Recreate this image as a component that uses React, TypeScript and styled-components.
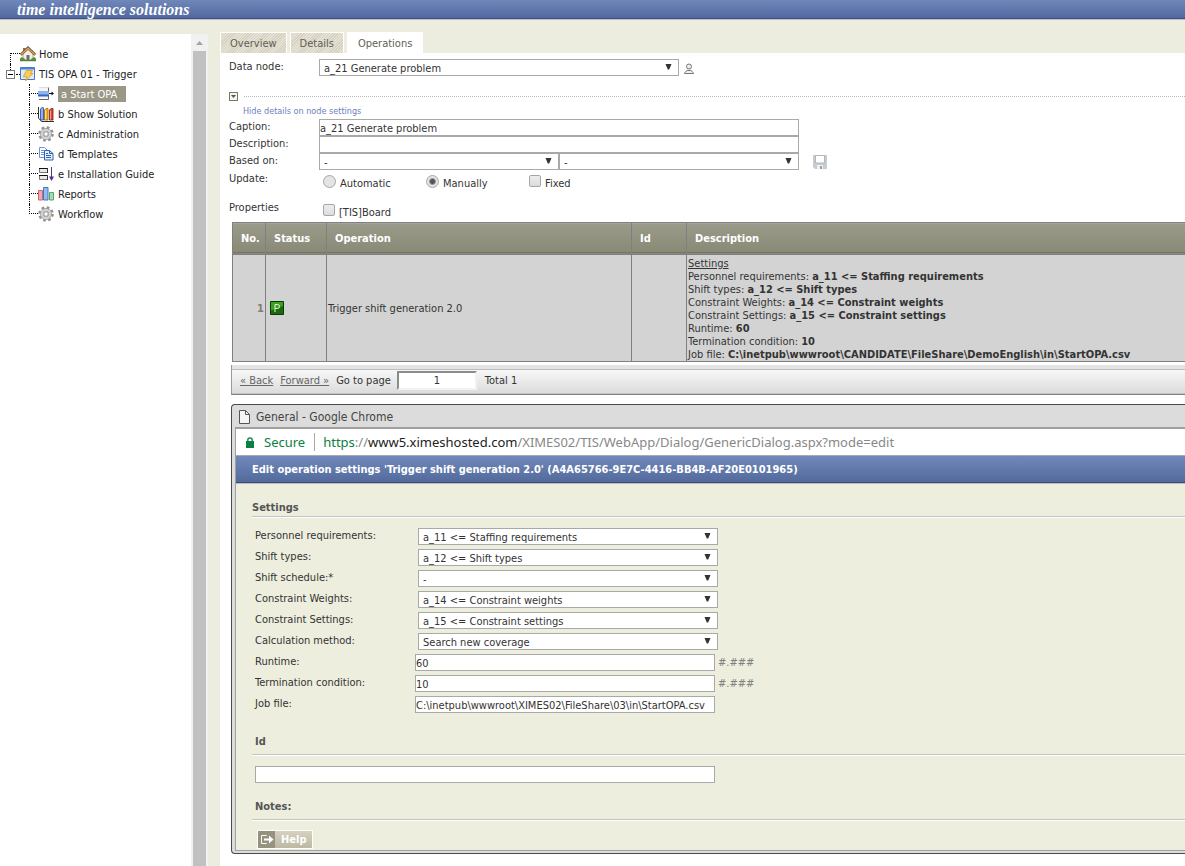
import React from "react";
import styled, { createGlobalStyle } from "styled-components";

const ui = '"DejaVu Sans Condensed", Tahoma, "Noto Sans", sans-serif';
const addressUi = '"Noto Sans", "Open Sans", sans-serif';

const Global = createGlobalStyle`
  *, *::before, *::after { box-sizing: border-box; }
  html, body, #root { height: 100%; }
  body {
    margin: 0;
    background: #ececdf;
    color: #333;
    font: 11px/13px ${ui};
  }
  input, select, button { font: inherit; color: inherit; margin: 0; }
  ul { list-style: none; margin: 0; padding: 0; }
`;

const Page = styled.div`
  display: flex;
  flex-direction: column;
  height: 100vh;
  overflow: hidden;
`;

const Banner = styled.header`
  flex: none;
  height: 19px;
  padding-left: 17px;
  border-bottom: 1px solid #3e5080;
  background: linear-gradient(#6f87b9, #5169a0);
  box-shadow: 0 1px 0 #b9bfcb;
  color: #fff;
  font: italic bold 16px/20px "Liberation Serif", serif;
  white-space: nowrap;
`;

const Columns = styled.div`
  flex: 1;
  min-height: 0;
  display: flex;
`;

/* ---------- navigation tree ---------- */

const Sidebar = styled.nav`
  flex: none;
  display: flex;
  width: 208px;
  margin: 15px 12px 0 0;
  background: #fff;
`;

const Tree = styled.ul`
  flex: 1;
  && { padding-top: 10px; }
`;

const ScrollTrack = styled.div`
  display: flex;
  flex-direction: column;
  align-items: center;
  width: 17px;
  background: #f1f1f1;
`;

const ScrollArrow = styled.svg`
  flex: none;
  width: 17px;
  height: 17px;
`;

const ScrollThumb = styled.div`
  flex: 1;
  width: 13px;
  background: #c1c1c1;
`;

const TreeRow = styled.div`
  display: flex;
  align-items: center;
  height: 20px;
  padding-left: ${(p: { $root?: boolean }) => (p.$root ? "6px" : "29px")};
`;

const Branch = styled.span<{ $last?: boolean }>`
  display: flex;
  flex-direction: column;
  width: 9px;
  height: 20px;
  &::before {
    content: "";
    height: 10px;
    border-left: 1px dotted #000;
    border-bottom: 1px dotted #000;
  }
  &::after {
    content: "";
    height: 10px;
    border-left: ${(p) => (p.$last ? "0" : "1px dotted #000")};
  }
`;

const FirstBranch = styled.span`
  align-self: flex-end;
  width: 10px;
  height: 11px;
  margin-left: 4px;
  border-left: 1px dotted #000;
  border-top: 1px dotted #000;
`;

const ExpanderCell = styled.span`
  display: flex;
  flex-direction: column;
  height: 20px;
  &::before {
    content: "";
    height: 6px;
    margin-left: 4px;
    border-left: 1px dotted #000;
  }
`;

const Expander = styled.button`
  display: grid;
  place-items: center;
  width: 9px;
  height: 9px;
  padding: 0;
  border: 1px solid #7b7b7b;
  background: #fff;
  &::before {
    content: "";
    width: 5px;
    height: 1px;
    background: #000;
  }
`;

const Stub = styled.span`
  width: 4px;
  margin-left: 1px;
  border-top: 1px dotted #000;
`;

const TreeIcon = styled.svg`
  flex: none;
  width: 16px;
  height: 16px;
`;

const TreeLink = styled.a<{ $active?: boolean; $root?: boolean }>`
  margin-left: ${(p) => (p.$root ? "3px" : "4px")};
  padding: ${(p) => (p.$active ? "2px 9px 1px 3px" : "0")};
  background: ${(p) => (p.$active ? "#9a9787" : "none")};
  color: ${(p) => (p.$active ? "#fff" : "#222")};
  text-decoration: none;
  white-space: nowrap;
`;

/* ---------- main column ---------- */

const Main = styled.main`
  flex: 1;
  min-width: 0;
  display: flex;
  flex-direction: column;
`;

const Tabs = styled.div`
  display: flex;
  gap: 3px;
  padding-top: 13px;
`;

const Tab = styled.button<{ $active?: boolean }>`
  height: 21px;
  padding: ${(p) => (p.$active ? "1px 10px 0" : "1px 9px 0")};
  border: 1px solid #fff;
  border-bottom: 0;
  background: ${(p) =>
    p.$active
      ? "#fff"
      : "repeating-linear-gradient(135deg, #e6e3d6 0 1px, #d6d2bf 1px 2px)"};
  color: #5f5f55;
`;

const Panel = styled.section`
  flex: 1;
  min-height: 0;
  background: #fff;
`;

const NodeForm = styled.div`
  padding: 6px 0 0 9px;
`;

const FormRow = styled.div<{ $height?: number }>`
  display: flex;
  align-items: flex-start;
  height: ${(p) => p.$height || 17}px;
`;

const FormLabel = styled.label`
  flex: none;
  width: 90px;
  padding-top: 1px;
`;

const Select = styled.select<{ $width: number }>`
  appearance: none;
  width: ${(p) => p.$width}px;
  height: 17px;
  padding: 1px 18px 0 4px;
  border: 1px solid #a9a9a9;
  border-radius: 0;
  background: #fff
    url("data:image/svg+xml,%3Csvg xmlns='http://www.w3.org/2000/svg' width='7' height='7'%3E%3Cpath d='M.5 1h6L4.200 6.500H2.800z' fill='%23333'/%3E%3C/svg%3E")
    no-repeat right 6px top 3px;
  line-height: 13px;
`;

const TextBox = styled.input<{ $width: number }>`
  width: ${(p) => p.$width}px;
  height: 17px;
  padding: 1px 0 0;
  border: 1px solid #a9a9a9;
  background: #fff;
`;

const IconButton = styled.button<{ $gap: number }>`
  display: flex;
  margin-left: ${(p) => p.$gap}px;
  padding: 2px 0 0;
  border: 0;
  background: none;
`;

const FoldRow = styled.div`
  display: flex;
  align-items: center;
  gap: 6px;
  height: 9px;
  margin-top: 16px;
`;

const FoldButton = styled.button`
  display: grid;
  place-items: center;
  width: 9px;
  height: 9px;
  padding: 0;
  border: 1px solid #77786a;
  background: #f4f4ea;
`;

const DottedRule = styled.div`
  flex: 1;
  border-top: 1px dotted #bbb;
`;

const FoldLink = styled.a`
  display: block;
  margin: 4px 0 1px 14px;
  color: #6c80bd;
  font-size: 9px;
  line-height: 13px;
  text-decoration: none;
`;

const Choice = styled.label<{ $width?: number }>`
  display: flex;
  align-items: flex-start;
  gap: 4px;
  width: ${(p) => (p.$width ? p.$width + "px" : "auto")};
  padding: 4px 0 0 4px;
  span { padding-top: 2px; }
`;

const Radio = styled.input`
  appearance: none;
  flex: none;
  width: 13px;
  height: 13px;
  border: 1px solid #a6a6a6;
  border-radius: 50%;
  background: #e4e4e4;
  &:checked {
    background: radial-gradient(circle, #555 0 2px, #e4e4e4 4px);
  }
`;

const Check = styled.input`
  appearance: none;
  flex: none;
  width: 12px;
  height: 12px;
  border: 1px solid #a6a6a6;
  border-radius: 2px;
  background: linear-gradient(#ededed, #dcdcdc);
`;

/* ---------- operations table ---------- */

const Grid = styled.table`
  width: calc(100% - 12px);
  margin-left: 12px;
  border-collapse: collapse;
  table-layout: fixed;
`;

const Head = styled.th<{ $width?: number }>`
  width: ${(p) => (p.$width ? p.$width + "px" : "auto")};
  height: 32px;
  padding: 0 0 0 8px;
  border: 1px solid #808080;
  border-right-width: ${(p) => (p.$width ? "1px" : "0")};
  background: linear-gradient(#9b9b8b, #898976 29px, #5f5f50 29px, #5f5f50 30px, #b0b0a4 30px);
  color: #fff;
  text-align: left;
`;

const Cell = styled.td<{ $open?: boolean }>`
  height: 107px;
  padding: ${(p) => (p.$open ? "2px 1px 0" : "0 1px")};
  border: 1px solid #808080;
  border-right-width: ${(p) => (p.$open ? "0" : "1px")};
  background: #d3d3d3;
  white-space: nowrap;
`;

const RowNumber = styled.div`
  color: #808070;
  font-weight: bold;
  text-align: right;
`;

const StatusIcon = styled.svg`
  display: block;
  width: 14px;
  height: 14px;
  margin-left: 3px;
`;

const Pager = styled.div`
  display: flex;
  align-items: center;
  height: 30px;
  margin: 3px 0 0 11px;
  padding: 2px 0 0 8px;
  border-left: 1px solid #999;
  border-bottom: 1px solid #808080;
  background: linear-gradient(#e4e4e4 4px, #bdbdbd 4px, #bdbdbd 5px, #f7f7f7 5px, #dcdcdc 28px, #c4c4c4 28px);
`;

const PagerLink = styled.a`
  margin-right: 7px;
  color: #666;
`;

const PageBox = styled.input`
  width: 80px;
  height: 19px;
  margin: 0 8px 0 6px;
  border: 2px solid;
  border-color: #8c8c8c #f2f2f2 #f2f2f2 #8c8c8c;
  background: #fff;
  text-align: center;
`;

/* ---------- dialog window ---------- */

const Window = styled.section`
  margin: 9px 0 0 11px;
  padding: 0 0 2px 3px;
  border: 1px solid #4a4a4a;
  border-right: 0;
  border-radius: 4px 0 0 4px;
  background: #dcdcdc;
  overflow: hidden;
`;

const TitleBar = styled.div`
  display: flex;
  align-items: center;
  gap: 6px;
  height: 22px;
  padding: 1px 0 0 4px;
  color: #444;
  font-size: 12px;
  line-height: 16px;
`;

const WindowBody = styled.div`
  border: 1px solid #a0a0a0;
  border-width: 2px 0 1px 1px;
  background: #edeedd;
`;

const AddressBar = styled.div`
  display: flex;
  align-items: center;
  height: 27px;
  padding-left: 10px;
  border-bottom: 1px solid #aaa;
  background: #fff;
  color: #888;
  font: 13px/18px ${addressUi};
  white-space: nowrap;
`;

const Secure = styled.span`
  margin: 0 8px 0 10px;
  padding-right: 9px;
  border-right: 1px solid #aaa;
  color: #0b8043;
`;

const Scheme = styled.span`
  color: #0b8043;
`;

const Host = styled.span`
  color: #222;
`;

const DialogTitle = styled.h1`
  height: 27px;
  margin: 0;
  padding-left: 16px;
  border-bottom: 1px solid #3a4c80;
  background: linear-gradient(#7088ba, #536a9c);
  color: #fff;
  font-size: 11px;
  line-height: 27px;
  white-space: nowrap;
  box-shadow: 0 1px 0 #b8bdb8;
`;

const DialogBody = styled.form`
  padding: 18px 0 1px 16px;
`;

const Heading = styled.h2<{ $inset?: boolean }>`
  margin: 0;
  padding: ${(p) => (p.$inset ? "0 0 5px 3px" : "0 0 1px")};
  border-bottom: 1px solid #c4c4c4;
  box-shadow: 0 1px 0 #fff;
  color: #555;
  font-size: 11px;
  line-height: 14px;
`;

const Fields = styled.div`
  display: flex;
  flex-direction: column;
  gap: 4px;
  padding: 11px 0 22px 3px;
`;

const Field = styled.div<{ $list?: boolean }>`
  display: flex;
  align-items: center;
  height: 17px;
  label {
    width: ${(p) => (p.$list ? "163px" : "160px")};
    padding-bottom: 2px;
  }
`;

const Format = styled.span`
  margin-left: 3px;
  color: #808080;
`;

const IdField = styled.div`
  display: flex;
  padding: 11px 0 17px 3px;
`;

const HelpButton = styled.button`
  display: flex;
  align-items: center;
  height: 19px;
  margin: 10px 0 0 5px;
  padding: 0 6px 0 0;
  border: 1px solid #fff;
  background: linear-gradient(#d6d1c0, #bdb8a3);
  color: #fff;
  font-weight: bold;
  svg { margin-right: 6px; }
`;

/* ---------- icons ---------- */

const HomeIcon = () => (
  <TreeIcon viewBox="0 0 16 16">
    <path d="M3 7.500 8 3l5 4.500V14H3z" fill="#f4efe2" stroke="#a89f8c" strokeWidth=".8" />
    <path d="M3 2h2.500v4H3z" fill="#b5653a" />
    <path d="M.8 8.800 8 2l7.200 6.800" fill="none" stroke="#6f4a25" strokeWidth="2.800" />
    <path d="M1.300 8.500 8 2.200l6.700 6.300" fill="none" stroke="#dba566" strokeWidth="1.300" />
    <path d="M6.500 9h3v5h-3z" fill="#6d6d6d" />
    <path d="M0 12.500 2 11l3 2 .5 2H0zM16 12.500 14 11l-3 2-.5 2H16z" fill="#57923a" />
    <path d="M0 14h16v1.200H0z" fill="#4d7f35" />
  </TreeIcon>
);

const TriggerIcon = () => (
  <TreeIcon viewBox="0 0 16 16">
    <path d="M.5 1.500h14v12H.5z" fill="#dfeafb" stroke="#4b79c4" />
    <path d="M1 2h13v1.500H1z" fill="#4b83dc" />
    <path d="M6.500 4.500h6l-2 3H13L5.500 15l1.300-4.300H3.200z" fill="#fbcf55" stroke="#d59a2c" strokeWidth=".8" />
  </TreeIcon>
);

const StartIcon = () => (
  <TreeIcon viewBox="0 0 16 16">
    <path d="M1 2h9v4H1zM1 10h9v3H1z" fill="#f4f4f4" />
    <path d="M1 13.500h9.500V1.500" fill="none" stroke="#666" />
    <path d="M1 1.500h9" stroke="#ddd" />
    <path d="M0 5.500h11v5H0z" fill="#3565bd" />
    <path d="M0 5.500h11v3H0z" fill="#8db4f0" />
    <path d="M11 7.500h3" stroke="#111" />
    <path d="M13.500 5.500 16 7.500l-2.500 2z" fill="#111" />
  </TreeIcon>
);

const SolutionIcon = () => (
  <TreeIcon viewBox="0 0 16 16">
    <path d="M.5 1v11L3.500 15.500H16" fill="none" stroke="#333" />
    <path d="M2.500 3 4.500 1 5.500 2v12h-3z" fill="#8fb0ee" stroke="#27458c" strokeWidth=".8" />
    <path d="M6.500 4 8 2.500h2V14H6.500z" fill="#f7b733" stroke="#99610b" strokeWidth=".8" />
    <path d="M11.500 4 13 2.500h2V14h-3.500z" fill="#dd4a2c" stroke="#7d1b0b" strokeWidth=".8" />
    <path d="M7.500 4.500v9M12.500 4.500v9" stroke="#fff" strokeOpacity=".5" />
  </TreeIcon>
);

const GearIcon = () => (
  <TreeIcon viewBox="0 0 16 16">
    <circle cx="8" cy="8" r="6.500" fill="none" stroke="#929292" strokeWidth="2.600" strokeDasharray="2.600 2.500" />
    <circle cx="8" cy="8" r="4.200" fill="none" stroke="#9a9a9a" strokeWidth="3.400" />
    <circle cx="8" cy="8" r="4.200" fill="none" stroke="#d4d4d4" strokeWidth="2.200" />
    <circle cx="8" cy="8" r="2.200" fill="#fff" stroke="#8a8a8a" strokeWidth=".8" />
  </TreeIcon>
);

const TemplatesIcon = () => (
  <TreeIcon viewBox="0 0 16 16">
    <path d="M1.500 1.500h5l3 3v7h-8z" fill="#fff" stroke="#6c94d8" />
    <path d="M3 4.500h3M3 6.500h4M3 8.500h4" stroke="#6c94d8" />
    <path d="M6.500 4.500h5l3.500 3v6.500H6.500z" fill="#e4eefc" stroke="#2f62b4" />
    <path d="M11.500 4.500v3H15M8 7.500h2M8 9.500h5M8 11.500h5" fill="none" stroke="#2f62b4" />
  </TreeIcon>
);

const GuideIcon = () => (
  <TreeIcon viewBox="0 0 16 16">
    <path d="M1.500 2.500h8v4h-8zM1.500 9.500h8v4h-8z" fill="#e8e8e8" stroke="#777" />
    <path d="M1 2.500h9M1 9.500h9" stroke="#111" />
    <path d="M9.500 2v5M9.500 9v5" stroke="#333" />
    <path d="M13.500 1v11" stroke="#5b2d91" />
    <path d="M11 10.500h5l-2.500 4.500z" fill="#5b2d91" />
  </TreeIcon>
);

const ReportsIcon = () => (
  <TreeIcon viewBox="0 0 16 16">
    <path d="M.5 4.500h4v9.500h-4z" fill="#f2a9ae" stroke="#d8606b" />
    <path d="M5.500 1.500h4.500V14H5.500z" fill="#93bdf0" stroke="#3f78c6" />
    <path d="M11.500 6.500h4V14h-4z" fill="#a8dcae" stroke="#54a862" />
  </TreeIcon>
);

const icons: Record<string, React.FC> = {
  start: StartIcon,
  solution: SolutionIcon,
  gear: GearIcon,
  templates: TemplatesIcon,
  guide: GuideIcon,
  reports: ReportsIcon,
};

const nodes = [
  { icon: "start", text: "a Start OPA", active: true },
  { icon: "solution", text: "b Show Solution" },
  { icon: "gear", text: "c Administration" },
  { icon: "templates", text: "d Templates" },
  { icon: "guide", text: "e Installation Guide" },
  { icon: "reports", text: "Reports" },
  { icon: "gear", text: "Workflow" },
];

const details = [
  ["Personnel requirements:", "a_11 <= Staffing requirements"],
  ["Shift types:", "a_12 <= Shift types"],
  ["Constraint Weights:", "a_14 <= Constraint weights"],
  ["Constraint Settings:", "a_15 <= Constraint settings"],
  ["Runtime:", "60"],
  ["Termination condition:", "10"],
  ["Job file:", "C:\\inetpub\\wwwroot\\CANDIDATE\\FileShare\\DemoEnglish\\in\\StartOPA.csv"],
];

const lists = [
  ["Personnel requirements:", "a_11 <= Staffing requirements"],
  ["Shift types:", "a_12 <= Shift types"],
  ["Shift schedule:*", "-"],
  ["Constraint Weights:", "a_14 <= Constraint weights"],
  ["Constraint Settings:", "a_15 <= Constraint settings"],
  ["Calculation method:", "Search new coverage"],
];

const inputs = [
  { label: "Runtime:", value: "60", format: "#.###" },
  { label: "Termination condition:", value: "10", format: "#.###" },
  { label: "Job file:", value: "C:\\inetpub\\wwwroot\\XIMES02\\FileShare\\03\\in\\StartOPA.csv" },
];

export default function App() {
  return (
    <Page>
      <Global />
      <Banner>time intelligence solutions</Banner>
      <Columns>
        <Sidebar>
          <Tree>
            <li>
              <TreeRow $root>
                <FirstBranch />
                <HomeIcon />
                <TreeLink href="#home" $root>Home</TreeLink>
              </TreeRow>
            </li>
            <li>
              <TreeRow $root>
                <ExpanderCell>
                  <Expander type="button" aria-label="Collapse" />
                </ExpanderCell>
                <Stub />
                <TriggerIcon />
                <TreeLink href="#trigger" $root>TIS OPA 01 - Trigger</TreeLink>
              </TreeRow>
              <ul>
                {nodes.map((node, i) => {
                  const Icon = icons[node.icon];
                  return (
                    <li key={node.text}>
                      <TreeRow>
                        <Branch $last={i === nodes.length - 1} />
                        <Icon />
                        <TreeLink href={"#node-" + i} $active={node.active}>{node.text}</TreeLink>
                      </TreeRow>
                    </li>
                  );
                })}
              </ul>
            </li>
          </Tree>
          <ScrollTrack>
            <ScrollArrow viewBox="0 0 17 17">
              <path d="M5 11h7L8.500 7z" fill="#a3a3a3" />
            </ScrollArrow>
            <ScrollThumb />
          </ScrollTrack>
        </Sidebar>

        <Main>
          <Tabs>
            <Tab type="button">Overview</Tab>
            <Tab type="button">Details</Tab>
            <Tab type="button" $active>Operations</Tab>
          </Tabs>
          <Panel>
            <NodeForm>
              <FormRow>
                <FormLabel htmlFor="data-node">Data node:</FormLabel>
                <Select id="data-node" $width={360}><option>a_21 Generate problem</option></Select>
                <IconButton type="button" $gap={5} aria-label="User">
                  <svg width="10" height="14" viewBox="0 0 10 14">
                    <circle cx="5" cy="5.500" r="2.500" fill="#eee" stroke="#777" />
                    <path d="M.5 12.500c.5-2 2-2.500 3.500-3.500L5 10l1-1c1.500 1 3 1.500 3.500 3.500z" fill="#eee" stroke="#777" />
                  </svg>
                </IconButton>
              </FormRow>
              <FoldRow>
                <FoldButton type="button" aria-label="Toggle details">
                  <svg width="5" height="3" viewBox="0 0 5 3"><path d="M0 0h5L2.500 3z" fill="#55564a" /></svg>
                </FoldButton>
                <DottedRule />
              </FoldRow>
              <FoldLink href="#details">Hide details on node settings</FoldLink>
              <FormRow>
                <FormLabel htmlFor="caption">Caption:</FormLabel>
                <TextBox id="caption" $width={480} defaultValue="a_21 Generate problem" />
              </FormRow>
              <FormRow>
                <FormLabel htmlFor="description">Description:</FormLabel>
                <TextBox id="description" $width={480} />
              </FormRow>
              <FormRow $height={18}>
                <FormLabel htmlFor="based-on">Based on:</FormLabel>
                <Select id="based-on" $width={240}><option>-</option></Select>
                <Select aria-label="Based on, second" $width={240}><option>-</option></Select>
                <IconButton type="button" $gap={14} aria-label="Save">
                  <svg width="14" height="14" viewBox="0 0 14 14">
                    <path d="M0 0h14v14H2l-2-2z" fill="#c6ccd1" />
                    <path d="M2.500.5h9V8h-9z" fill="#fff" stroke="#b0b7be" />
                    <path d="M4 10h6v4H4z" fill="#eef0f2" />
                    <path d="M7 11h2v3H7z" fill="#9aa1a8" />
                  </svg>
                </IconButton>
              </FormRow>
              <FormRow $height={29}>
                <FormLabel as="span">Update:</FormLabel>
                <Choice $width={103}><Radio type="radio" name="update" /><span>Automatic</span></Choice>
                <Choice $width={103}><Radio type="radio" name="update" defaultChecked /><span>Manually</span></Choice>
                <Choice><Check type="checkbox" /><span>Fixed</span></Choice>
              </FormRow>
              <FormRow $height={22}>
                <FormLabel as="span">Properties</FormLabel>
                <Choice><Check type="checkbox" /><span>[TIS]Board</span></Choice>
              </FormRow>
            </NodeForm>

            <Grid>
              <thead>
                <tr>
                  <Head $width={33}>No.</Head>
                  <Head $width={61}>Status</Head>
                  <Head $width={305}>Operation</Head>
                  <Head $width={55}>Id</Head>
                  <Head>Description</Head>
                </tr>
              </thead>
              <tbody>
                <tr>
                  <Cell><RowNumber>1</RowNumber></Cell>
                  <Cell>
                    <StatusIcon viewBox="0 0 14 14">
                      <path d="M.5.5h13v13H.5z" fill="#3aa01f" stroke="#0c3a04" />
                      <path d="M1 9.500 13 5v8H1z" fill="#1d6a0c" />
                      <path d="M5 11V3.500h2.500a2 2 0 0 1 0 4H5" fill="none" stroke="#e8f5e0" />
                    </StatusIcon>
                  </Cell>
                  <Cell>Trigger shift generation 2.0</Cell>
                  <Cell />
                  <Cell $open>
                    <u>Settings</u>
                    {details.map(([name, value]) => (
                      <div key={name}>{name} <b>{value}</b></div>
                    ))}
                  </Cell>
                </tr>
              </tbody>
            </Grid>

            <Pager>
              <PagerLink href="#back">« Back</PagerLink>
              <PagerLink href="#forward">Forward »</PagerLink>
              <label htmlFor="page">Go to page</label>
              <PageBox id="page" defaultValue="1" />
              <span>Total 1</span>
            </Pager>

            <Window>
              <TitleBar>
                <svg width="11" height="14" viewBox="0 0 11 14">
                  <path d="M.5.5h6l4 4v9H.5z" fill="#f4f4f4" stroke="#555" />
                  <path d="M6.500.5v4h4" fill="none" stroke="#555" />
                </svg>
                General - Google Chrome
              </TitleBar>
              <WindowBody>
                <AddressBar>
                  <svg width="8" height="11" viewBox="0 0 8 11">
                    <path d="M0 4h8v7H0z" fill="#0b8043" />
                    <path d="M1.800 4.500V3a2.200 2.200 0 0 1 4.400 0v1.500" fill="none" stroke="#0b8043" strokeWidth="1.300" />
                  </svg>
                  <Secure>Secure</Secure>
                  <Scheme>https</Scheme>://<Host>www5.ximeshosted.com</Host>/XIMES02/TIS/WebApp/Dialog/GenericDialog.aspx?mode=edit
                </AddressBar>
                <DialogTitle>Edit operation settings 'Trigger shift generation 2.0' (A4A65766-9E7C-4416-BB4B-AF20E0101965)</DialogTitle>
                <DialogBody>
                  <Heading>Settings</Heading>
                  <Fields>
                    {lists.map(([label, value], i) => (
                      <Field key={label} $list>
                        <label htmlFor={"list-" + i}>{label}</label>
                        <Select id={"list-" + i} $width={300}><option>{value}</option></Select>
                      </Field>
                    ))}
                    {inputs.map((item, i) => (
                      <Field key={item.label}>
                        <label htmlFor={"input-" + i}>{item.label}</label>
                        <TextBox id={"input-" + i} $width={300} defaultValue={item.value} />
                        {item.format && <Format>{item.format}</Format>}
                      </Field>
                    ))}
                  </Fields>
                  <Heading $inset>Id</Heading>
                  <IdField><TextBox aria-label="Id" $width={460} /></IdField>
                  <Heading $inset>Notes:</Heading>
                  <HelpButton type="button">
                    <svg width="17" height="17" viewBox="0 0 17 17">
                      <path d="M0 0h17v17H0z" fill="#95937f" />
                      <path d="M8.500 5V4.500h-5v8h5V12" fill="none" stroke="#fff" />
                      <path d="M6 7.500h5v-3l4.500 4-4.500 4v-3H6z" fill="#fff" />
                    </svg>
                    Help
                  </HelpButton>
                </DialogBody>
              </WindowBody>
            </Window>
          </Panel>
        </Main>
      </Columns>
    </Page>
  );
}
